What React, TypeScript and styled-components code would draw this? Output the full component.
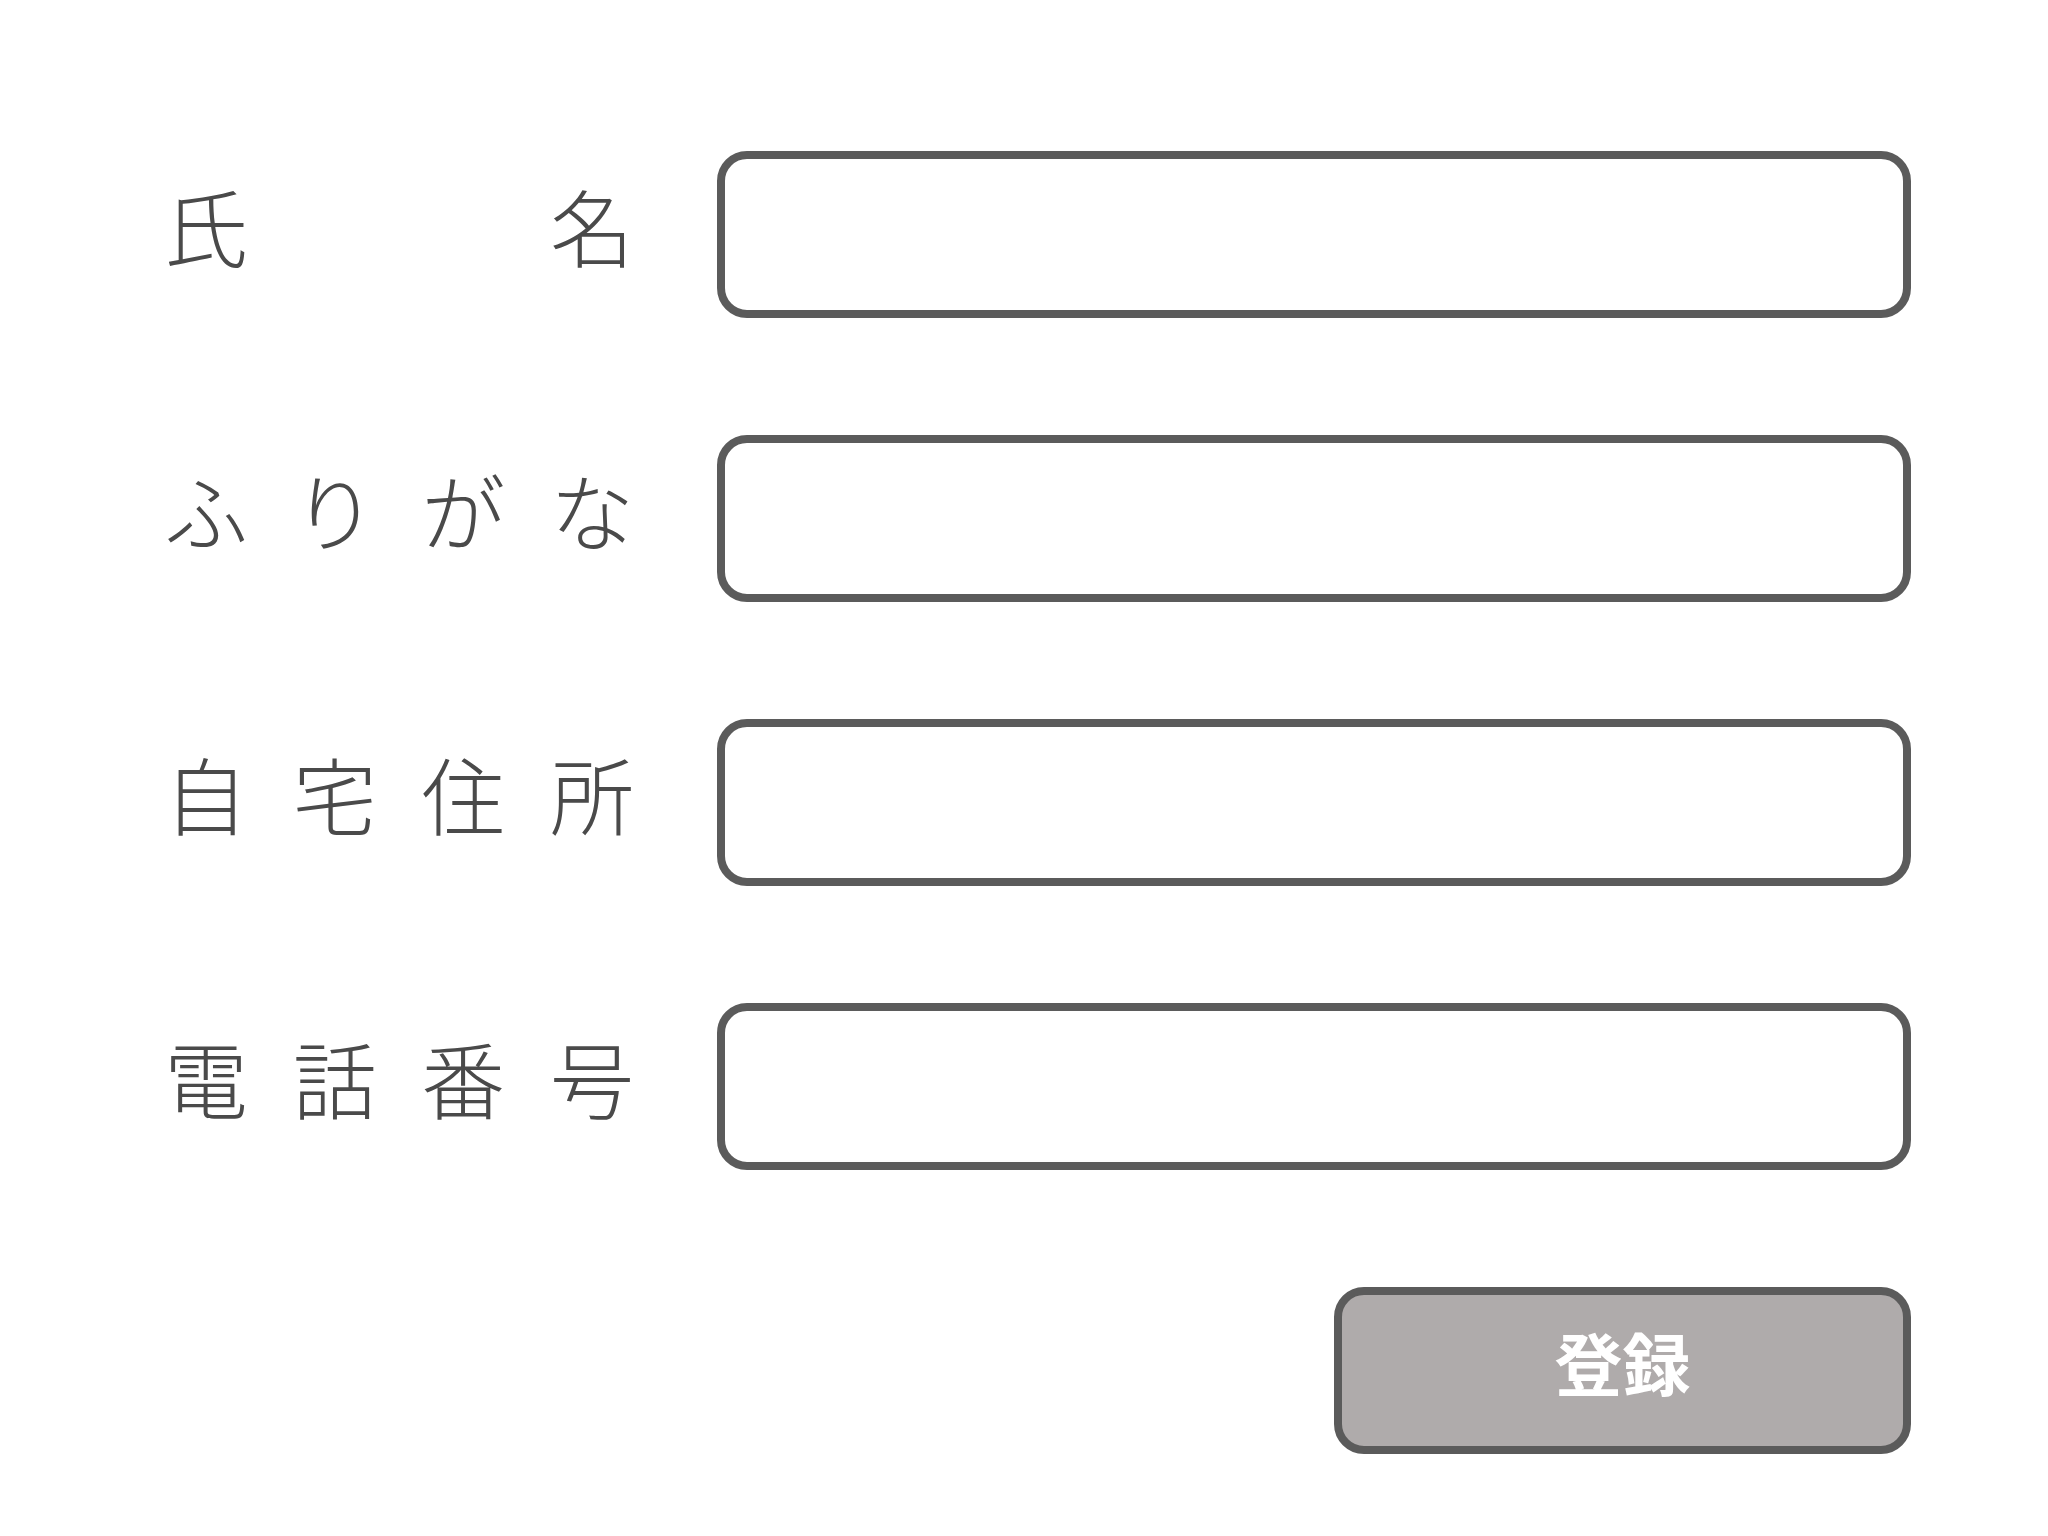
import React from 'react';
import styled, { createGlobalStyle } from 'styled-components';

const GlobalStyle = createGlobalStyle`
    html, body {
        margin: 0;
        padding: 0;
        background-color: #ffffff;
    }
    body {
        font-family: "Noto Sans CJK JP", "Noto Sans", sans-serif;
    }
`;

const Page = styled.div`
    width: 2048px;
    height: 1536px;
    box-sizing: border-box;
    padding: 151px 0 0 164px;
`;

const Form = styled.form`
    display: grid;
    grid-template-columns: 470px 1194px;
    column-gap: 83px;
    row-gap: 117px;
    align-items: center;
`;

const Label = styled.label`
    display: block;
    margin-bottom: 20px;
    font-size: 84px;
    font-weight: 300;
    line-height: 1;
    color: #4a4a4a;
    text-align: justify;
    text-align-last: justify;
`;

const Input = styled.input`
    display: block;
    width: 100%;
    height: 167px;
    box-sizing: border-box;
    border: 8px solid #5b5b5b;
    border-radius: 30px;
    background-color: #ffffff;
    padding: 0 32px;
    font-family: inherit;
    font-size: 60px;
    color: #333333;
    outline: none;
`;

const SubmitButton = styled.button`
    grid-column: 2;
    justify-self: end;
    width: 577px;
    height: 167px;
    box-sizing: border-box;
    border: 8px solid #5b5b5b;
    border-radius: 30px;
    padding: 0 0 18px;
    background-color: #afabab;
    color: #ffffff;
    font-family: "Noto Sans CJK JP", sans-serif;
    font-size: 68px;
    font-weight: 700;
    line-height: 1;
    cursor: pointer;
`;

const fields = [
    { id: 'name', label: '氏名' },
    { id: 'kana', label: 'ふりがな' },
    { id: 'address', label: '自宅住所' },
    { id: 'tel', label: '電話番号' },
];

const App: React.FC = () => {
    return (
        <>
            <GlobalStyle />
            <Page>
                <Form onSubmit={(e) => e.preventDefault()}>
                    {fields.map((field) => (
                        <React.Fragment key={field.id}>
                            <Label htmlFor={field.id}>{field.label}</Label>
                            <Input id={field.id} type="text" />
                        </React.Fragment>
                    ))}
                    <SubmitButton type="submit">登録</SubmitButton>
                </Form>
            </Page>
        </>
    );
};

export default App;
